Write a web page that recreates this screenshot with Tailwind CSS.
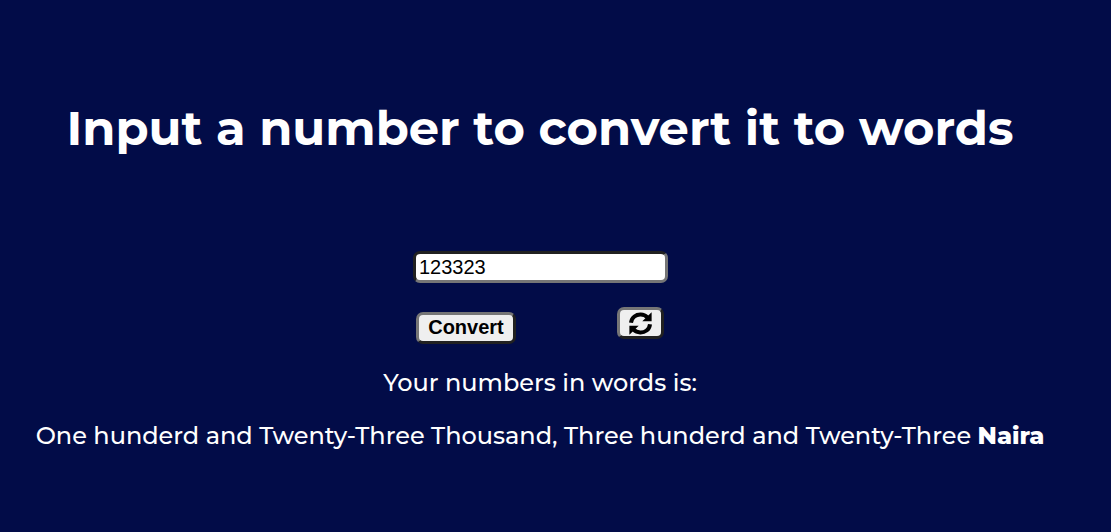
<!DOCTYPE html>
<html lang="en">
<head>
<meta charset="utf-8">
<title>Number to words</title>
<script src="https://cdn.jsdelivr.net/npm/@tailwindcss/browser@4"></script>
</head>
<body class="h-screen overflow-hidden bg-[#020c48] font-[Montserrat,Inter,sans-serif] text-white">
<main class="flex w-[1080px] flex-col items-center whitespace-nowrap pt-[98px]">
  <h1 class="h-[60px] text-[48px] leading-[60px] font-bold">Input a number to convert it to words</h1>
  <input class="mt-[93px] ml-px h-8 w-[255px] rounded-[7px] border-[3px] border-t-[#212121] border-l-[#212121] border-r-[#767676] border-b-[#767676] bg-white px-[3px] font-['Liberation_Sans',sans-serif] text-[20px] leading-6 text-black" value="123323">
  <div class="mt-6 ml-px flex w-[249px] items-start justify-between pr-px">
    <button class="mt-[5px] h-8 w-[100px] rounded-[7px] border-[3px] border-t-[#767676] border-l-[#767676] border-r-[#212121] border-b-[#212121] bg-[#efefef] pb-0.5 font-['Liberation_Sans',sans-serif] text-[20px] leading-6 font-bold text-black">Convert</button>
    <button aria-label="Reset" class="flex h-8 w-[47px] items-center justify-center rounded-[7px] border-[3px] border-t-[#767676] border-l-[#767676] border-r-[#212121] border-b-[#212121] bg-[#efefef] text-black">
      <svg class="h-[23px] w-[23px]" viewBox="0 0 23 23" fill="none" stroke="currentColor" stroke-width="4">
        <path d="M2 10.8C2.6 5.2 7.2 2.3 11.8 2.5c2.8.1 4.8 1 6.6 2.8"/>
        <path d="M22.6.2v9h-9.3z" fill="currentColor" stroke="none"/>
        <path d="M21 12.2c-.6 5.6-5.2 8.5-9.8 8.3-2.8-.1-4.8-1-6.6-2.8"/>
        <path d="M.4 22.8v-9h9.3z" fill="currentColor" stroke="none"/>
      </svg>
    </button>
  </div>
  <p class="mt-6 h-[30px] text-[24px] leading-[30px] font-medium">Your numbers in words is:</p>
  <p class="mt-[23px] h-[30px] text-[24px] leading-[30px] font-medium">One hunderd and Twenty-Three Thousand, Three hunderd and Twenty-Three <b class="font-extrabold">Naira</b></p>
</main>
</body>
</html>
